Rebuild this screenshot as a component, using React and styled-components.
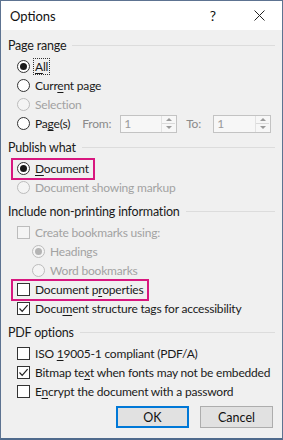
import React from "react";
import styled, { createGlobalStyle } from "styled-components";

const Global = createGlobalStyle`
  html, body { margin: 0; padding: 0; background: #fff; }
  body {
    font-family: Lato, "Noto Sans", sans-serif;
    font-size: 12px;
    letter-spacing: -0.2px;
    color: #1a1a1a;
  }
`;

const Win = styled.div`
  width: 283px;
  height: 440px;
  box-sizing: border-box;
  border: 1px solid #5d7391;
  border-bottom: 2px solid #4f6a8c;
  display: flex;
  flex-direction: column;
  background: #f0f0f0;
  overflow: hidden;
`;

const TitleBar = styled.div`
  height: 29px;
  background: #fff;
  display: flex;
  align-items: center;
  padding-left: 9px;
  font-size: 13px;
  letter-spacing: 0;
  color: #111;
`;

const Title = styled.div`
  flex: 1;
`;

const TitleBtn = styled.div`
  width: ${(p) => p.w}px;
  display: flex;
  justify-content: center;
  align-items: center;
  font-size: 14px;
`;

const Body = styled.div`
  flex: 1;
  padding: 6px 7px 0 7px;
  display: flex;
  flex-direction: column;
`;

const Section = styled.div`
  margin-top: ${(p) => (p.first ? 0 : 5)}px;
`;

const Header = styled.div`
  height: 19px;
  display: flex;
  align-items: center;
  gap: 6px;
  margin-bottom: 2px;
  font-size: 12.5px;
  &::after {
    content: "";
    flex: 1;
    height: 1px;
    background: #dcdcdc;
  }
`;

const Row = styled.div`
  height: 19px;
  display: flex;
  align-items: center;
  padding-left: ${(p) => 9 + (p.indent || 0)}px;
  color: ${(p) => (p.disabled ? "#a2a2a2" : "#1a1a1a")};
`;

const Label = styled.span`
  margin-left: 5px;
  white-space: nowrap;
  ${(p) =>
    p.focus &&
    `outline: 1px dotted #333; outline-offset: 0px; padding: 0 1px; margin-left: 4px;`}
`;

const Highlight = styled.div`
  display: inline-flex;
  align-items: center;
  margin-left: -6px;
  padding: 0 4px;
  border: 2px solid #d8177f;
  box-sizing: border-box;
  height: 22px;
  margin-top: -1.5px;
  margin-bottom: -1.5px;
`;

const Radio = styled.span`
  width: 13px;
  height: 13px;
  box-sizing: border-box;
  border-radius: 50%;
  border: 1px solid ${(p) => (p.disabled ? "#bcbcbc" : "#333")};
  background: ${(p) => (p.disabled ? "#f4f4f4" : "#fff")};
  display: inline-flex;
  align-items: center;
  justify-content: center;
  flex: none;
  &::after {
    content: "";
    display: ${(p) => (p.checked ? "block" : "none")};
    width: 7px;
    height: 7px;
    border-radius: 50%;
    background: ${(p) => (p.disabled ? "#b4b4b4" : "#1a1a1a")};
  }
`;

const Box = styled.span`
  width: 13px;
  height: 13px;
  box-sizing: border-box;
  border: 1px solid ${(p) => (p.disabled ? "#bcbcbc" : "#333")};
  background: ${(p) => (p.disabled ? "#f4f4f4" : "#fff")};
  display: inline-flex;
  align-items: center;
  justify-content: center;
  flex: none;
`;

const U = styled.span`
  text-decoration: underline;
  text-underline-offset: 2px;
`;

const SpinLabel = styled.span`
  color: #8a8a8a;
  margin-left: ${(p) => p.ml}px;
  width: ${(p) => p.w}px;
`;

const Spin = styled.div`
  width: ${(p) => p.w}px;
  height: 18px;
  box-sizing: border-box;
  border: 1px solid #c3c3c3;
  background: #f7f7f7;
  display: flex;
  align-items: center;
  color: #9a9a9a;
`;

const SpinValue = styled.span`
  flex: 1;
  padding-left: 3px;
`;

const SpinArrows = styled.div`
  width: 13px;
  height: 16px;
  display: flex;
  flex-direction: column;
  border-left: 1px solid #e2e2e2;
  margin-right: 1px;
`;

const Arrow = styled.div`
  flex: 1;
  display: flex;
  align-items: center;
  justify-content: center;
  border-top: ${(p) => (p.down ? "1px solid #dadada" : "none")};
  &::after {
    content: "";
    border-left: 3px solid transparent;
    border-right: 3px solid transparent;
    ${(p) => (p.down ? "border-top" : "border-bottom")}: 3px solid #9a9a9a;
  }
`;

const Buttons = styled.div`
  display: flex;
  justify-content: flex-end;
  gap: 11px;
  margin-top: 5px;
  padding-right: 2px;
`;

const Button = styled.div`
  width: 73px;
  height: 22px;
  box-sizing: border-box;
  background: #e1e1e1;
  border: ${(p) => (p.primary ? "2px solid #0078d7" : "1px solid #adadad")};
  display: flex;
  align-items: center;
  justify-content: center;
  font-size: 12.5px;
  letter-spacing: 0;
  color: #111;
`;

const Check = () => (
  <svg width="11" height="11" viewBox="0 0 11 11">
    <path d="M1.5 5.5 L4.2 8.3 L9.6 2.2" fill="none" stroke="#222" strokeWidth="1.2" />
  </svg>
);

const SpinBox = ({ w }) => (
  <Spin w={w}>
    <SpinValue>1</SpinValue>
    <SpinArrows>
      <Arrow />
      <Arrow down />
    </SpinArrows>
  </Spin>
);

export default function App() {
  return (
    <>
      <Global />
      <Win>
        <TitleBar>
          <Title>Options</Title>
          <TitleBtn w={46}>?</TitleBtn>
          <TitleBtn w={46}>
            <svg width="11" height="11" viewBox="0 0 11 11">
              <path d="M0.5 0.5 L10.5 10.5 M10.5 0.5 L0.5 10.5" stroke="#222" strokeWidth="1" />
            </svg>
          </TitleBtn>
        </TitleBar>
        <Body>
          <Section first>
            <Header>Page range</Header>
            <Row>
              <Radio checked />
              <Label focus>
                <U>A</U>ll
              </Label>
            </Row>
            <Row>
              <Radio />
              <Label>
                Curr<U>e</U>nt page
              </Label>
            </Row>
            <Row disabled>
              <Radio disabled />
              <Label>Selection</Label>
            </Row>
            <Row>
              <Radio />
              <Label>
                Pa<U>g</U>e(s)
              </Label>
              <SpinLabel ml={12} w={38}>From:</SpinLabel>
              <SpinBox w={57} />
              <SpinLabel ml={9} w={27}>To:</SpinLabel>
              <SpinBox w={58} />
            </Row>
          </Section>

          <Section>
            <Header>Publish what</Header>
            <Row>
              <Highlight>
                <Radio checked />
                <Label>
                  <U>D</U>ocument
                </Label>
              </Highlight>
            </Row>
            <Row disabled>
              <Radio disabled />
              <Label>Document showing markup</Label>
            </Row>
          </Section>

          <Section>
            <Header>Include non-printing information</Header>
            <Row disabled>
              <Box disabled />
              <Label>Create bookmarks using:</Label>
            </Row>
            <Row disabled indent={15}>
              <Radio disabled checked />
              <Label>Headings</Label>
            </Row>
            <Row disabled indent={15}>
              <Radio disabled />
              <Label>Word bookmarks</Label>
            </Row>
            <Row>
              <Highlight>
                <Box />
                <Label>
                  Document p<U>r</U>operties
                </Label>
              </Highlight>
            </Row>
            <Row>
              <Box>
                <Check />
              </Box>
              <Label>
                Docu<U>m</U>ent structure tags for accessibility
              </Label>
            </Row>
          </Section>

          <Section>
            <Header>PDF options</Header>
            <Row>
              <Box />
              <Label>
                ISO <U>1</U>9005-1 compliant (PDF/A)
              </Label>
            </Row>
            <Row>
              <Box>
                <Check />
              </Box>
              <Label>
                Bitmap te<U>x</U>t when fonts may not be embedded
              </Label>
            </Row>
            <Row>
              <Box />
              <Label>
                E<U>n</U>crypt the document with a password
              </Label>
            </Row>
          </Section>

          <Buttons>
            <Button primary>OK</Button>
            <Button>Cancel</Button>
          </Buttons>
        </Body>
      </Win>
    </>
  );
}
